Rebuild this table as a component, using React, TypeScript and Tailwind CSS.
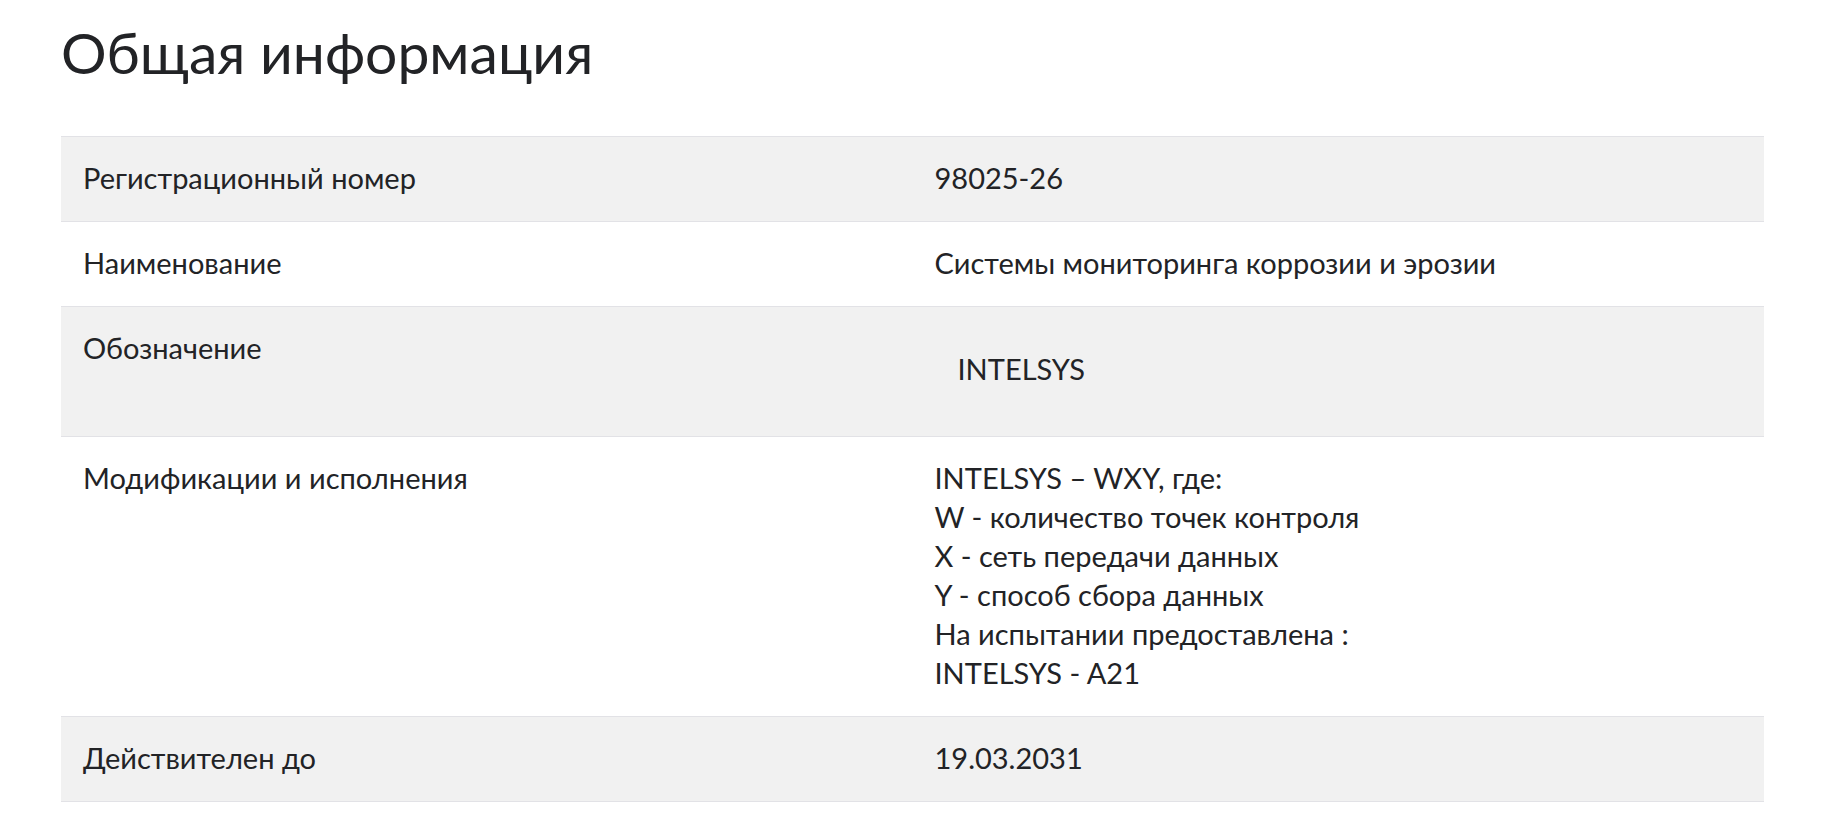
const rows: { label: string; value: React.ReactNode; shaded: boolean }[] = [
  { label: "Регистрационный номер", value: "98025-26", shaded: true },
  {
    label: "Наименование",
    value: "Системы мониторинга коррозии и эрозии",
    shaded: false,
  },
  {
    label: "Обозначение",
    value: <p className="mt-[21px] mb-[24px] pl-[23px]">INTELSYS</p>,
    shaded: true,
  },
  {
    label: "Модификации и исполнения",
    value: (
      <>
        <p>INTELSYS – WXY, где:</p>
        <p>W - количество точек контроля</p>
        <p>X - сеть передачи данных</p>
        <p>Y - способ сбора данных</p>
        <p>На испытании предоставлена :</p>
        <p>INTELSYS - A21</p>
      </>
    ),
    shaded: false,
  },
  { label: "Действителен до", value: "19.03.2031", shaded: true },
];

export default function App() {
  return (
    <div className="min-h-screen bg-white font-['Lato',sans-serif] text-[#222326]">
      <div className="pl-[61px] pr-[68px] pt-[17px]">
        <h1 className="text-[57px] font-normal leading-[70px]">Общая информация</h1>

        <div className="mt-[49px] border-b border-[#e2e2e6]">
          {rows.map((row) => (
            <div
              key={row.label}
              className={`grid grid-cols-2 border-t border-[#e2e2e6] pt-[21px] pb-[24px] text-[29px] leading-[39px] ${
                row.shaded ? "bg-[#f1f1f1]" : "bg-white"
              }`}
            >
              <div className="px-[22px]">{row.label}</div>
              <div className="px-[22px]">{row.value}</div>
            </div>
          ))}
        </div>
      </div>
    </div>
  );
}
